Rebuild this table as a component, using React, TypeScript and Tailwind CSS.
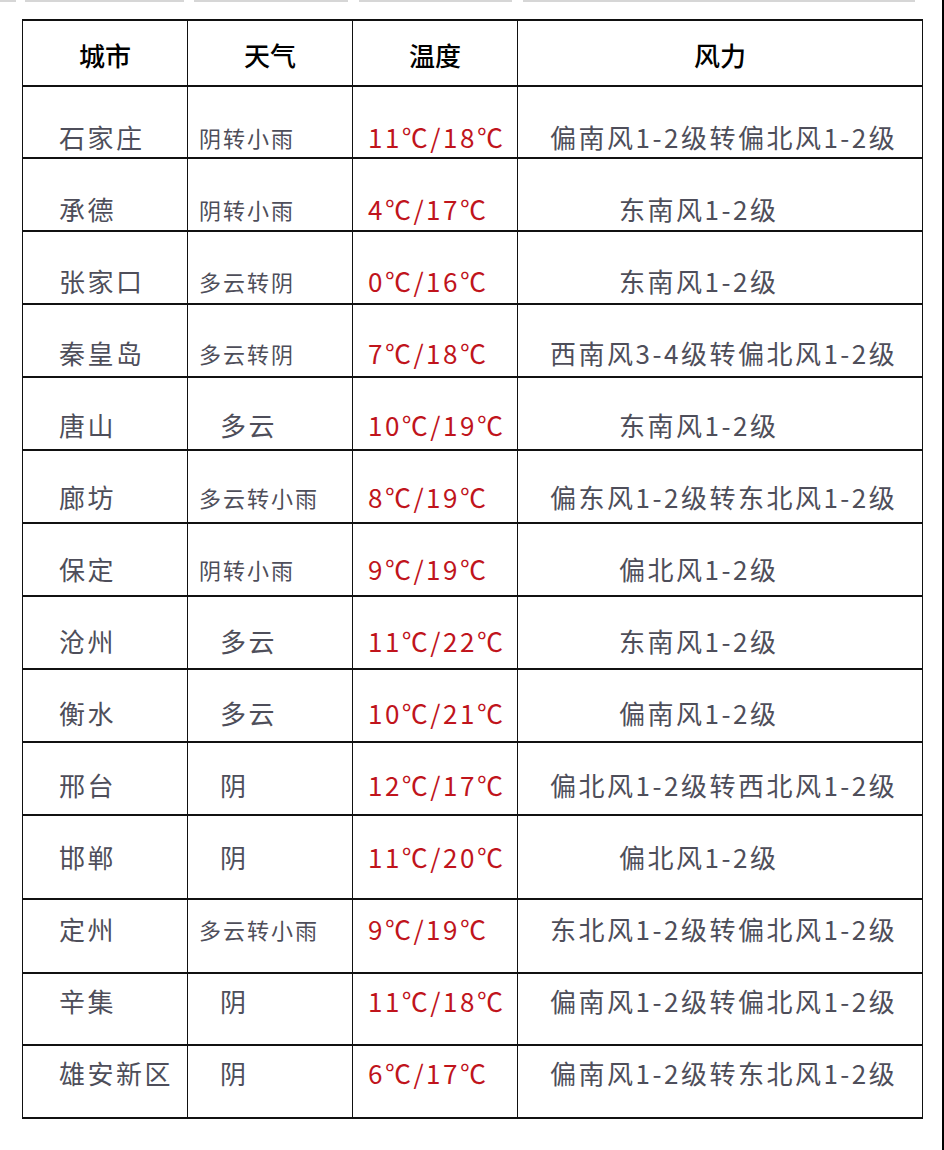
import React from 'react';

interface Row {
  city: string;
  weather: string;
  smallWeather: boolean;
  temp: string;
  wind: string;
  longWind: boolean;
  h: string;
  pt: string;
}

const rows: Row[] = [
  { city: '石家庄', weather: '阴转小雨', smallWeather: true, temp: '11℃/18℃', wind: '偏南风1-2级转偏北风1-2级', longWind: true, h: 'h-[72px]', pt: 'pt-[35px]' },
  { city: '承德', weather: '阴转小雨', smallWeather: true, temp: '4℃/17℃', wind: '东南风1-2级', longWind: false, h: 'h-[73px]', pt: 'pt-[35px]' },
  { city: '张家口', weather: '多云转阴', smallWeather: true, temp: '0℃/16℃', wind: '东南风1-2级', longWind: false, h: 'h-[73px]', pt: 'pt-[34px]' },
  { city: '秦皇岛', weather: '多云转阴', smallWeather: true, temp: '7℃/18℃', wind: '西南风3-4级转偏北风1-2级', longWind: true, h: 'h-[73px]', pt: 'pt-[33px]' },
  { city: '唐山', weather: '多云', smallWeather: false, temp: '10℃/19℃', wind: '东南风1-2级', longWind: false, h: 'h-[73px]', pt: 'pt-[32px]' },
  { city: '廊坊', weather: '多云转小雨', smallWeather: true, temp: '8℃/19℃', wind: '偏东风1-2级转东北风1-2级', longWind: true, h: 'h-[73px]', pt: 'pt-[31px]' },
  { city: '保定', weather: '阴转小雨', smallWeather: true, temp: '9℃/19℃', wind: '偏北风1-2级', longWind: false, h: 'h-[73px]', pt: 'pt-[30px]' },
  { city: '沧州', weather: '多云', smallWeather: false, temp: '11℃/22℃', wind: '东南风1-2级', longWind: false, h: 'h-[73px]', pt: 'pt-[29px]' },
  { city: '衡水', weather: '多云', smallWeather: false, temp: '10℃/21℃', wind: '偏南风1-2级', longWind: false, h: 'h-[73px]', pt: 'pt-[28px]' },
  { city: '邢台', weather: '阴', smallWeather: false, temp: '12℃/17℃', wind: '偏北风1-2级转西北风1-2级', longWind: true, h: 'h-[73px]', pt: 'pt-[27px]' },
  { city: '邯郸', weather: '阴', smallWeather: false, temp: '11℃/20℃', wind: '偏北风1-2级', longWind: false, h: 'h-[84px]', pt: 'pt-[26px]' },
  { city: '定州', weather: '多云转小雨', smallWeather: true, temp: '9℃/19℃', wind: '东北风1-2级转偏北风1-2级', longWind: true, h: 'h-[74px]', pt: 'pt-[14px]' },
  { city: '辛集', weather: '阴', smallWeather: false, temp: '11℃/18℃', wind: '偏南风1-2级转偏北风1-2级', longWind: true, h: 'h-[72px]', pt: 'pt-[12px]' },
  { city: '雄安新区', weather: '阴', smallWeather: false, temp: '6℃/17℃', wind: '偏南风1-2级转东北风1-2级', longWind: true, h: 'h-[75px] border-b-2', pt: 'pt-[12px]' },
];

const cell = 'border-l border-[#111] leading-[30px] whitespace-nowrap';

export default function App() {
  return (
    <div className="flex w-[944px] h-[1150px] bg-white overflow-hidden font-['Noto_Sans_CJK_SC','Noto_Sans_CJK_JP',sans-serif]">
      <div className="w-[942px] flex flex-col">
        {/* faded strip left over from the block above */}
        <div className="flex h-[2px]">
          <div className="w-[16px] bg-[#d6d6d6]" />
          <div className="w-[9px]" />
          <div className="w-[159px] bg-[#d6d6d6]" />
          <div className="w-[10px]" />
          <div className="w-[154px] bg-[#d6d6d6]" />
          <div className="w-[11px]" />
          <div className="w-[153px] bg-[#d6d6d6]" />
          <div className="w-[11px]" />
          <div className="w-[392px] bg-[#d6d6d6]" />
        </div>

        <div className="mt-[17px] ml-[22px] w-[901px] border-r border-[#111]">
          <div className="grid grid-cols-[165px_165px_165px_405px] h-[66px] border-t-2 border-[#111] text-[26px] font-medium text-black text-center">
            <div className={`${cell} pt-[19px]`}>城市</div>
            <div className={`${cell} pt-[19px]`}>天气</div>
            <div className={`${cell} pt-[19px]`}>温度</div>
            <div className={`${cell} pt-[19px]`}>风力</div>
          </div>

          {rows.map((r) => (
            <div
              key={r.city}
              className={`grid grid-cols-[165px_165px_165px_405px] border-t-2 border-[#111] text-[#4e4e5a] ${r.h}`}
            >
              <div className={`${cell} ${r.pt} pl-[36px] text-[26px] tracking-[2.5px]`}>{r.city}</div>
              <div
                className={`${cell} ${r.pt} ${
                  r.smallWeather ? 'pl-[11px] text-[22px] tracking-[2px]' : 'pl-[32px] text-[26px] tracking-[2.5px]'
                }`}
              >
                {r.weather}
              </div>
              <div className={`${cell} ${r.pt} pl-[15px] text-[26px] tracking-[2.5px] text-[#c0141c]`}>{r.temp}</div>
              <div
                className={`${cell} ${r.pt} ${r.longWind ? 'pl-[32px]' : 'pl-[101px]'} text-[26px] tracking-[2.5px]`}
              >
                {r.wind}
              </div>
            </div>
          ))}
        </div>
      </div>
      <div className="w-[2px] bg-black" />
    </div>
  );
}
